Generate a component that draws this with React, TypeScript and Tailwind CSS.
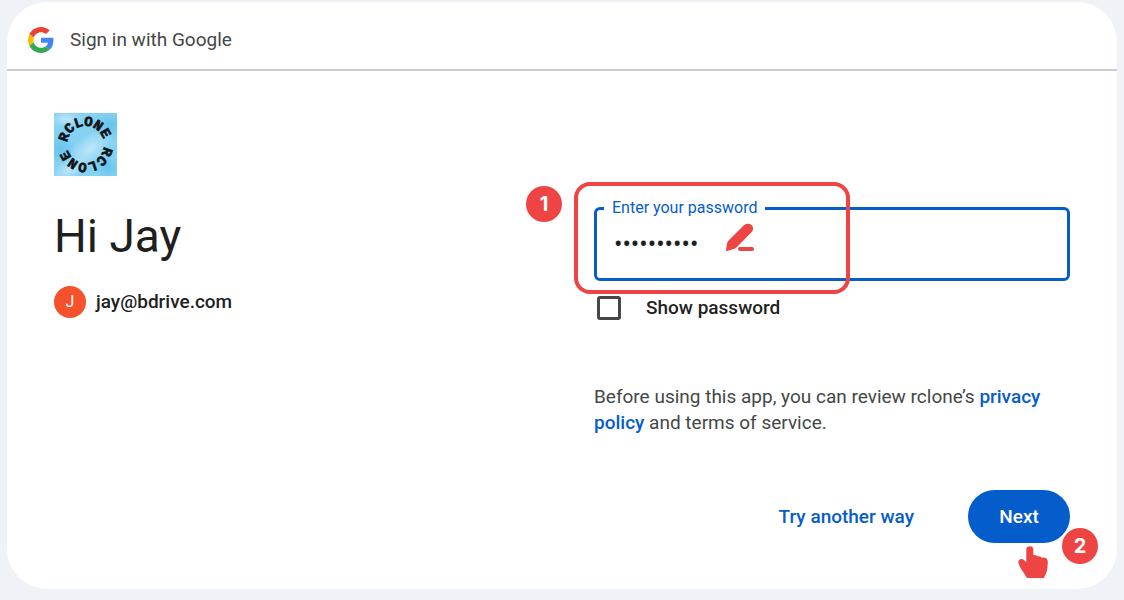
import React, { useState } from "react";

function GoogleLogo() {
  return (
    <svg viewBox="0 0 48 48" className="size-[26px]" aria-hidden="true">
      <path fill="#EA4335" d="M24 9.5c3.54 0 6.71 1.22 9.21 3.6l6.85-6.85C35.9 2.38 30.47 0 24 0 14.62 0 6.51 5.38 2.56 13.22l7.98 6.19C12.43 13.72 17.74 9.5 24 9.5z" />
      <path fill="#4285F4" d="M46.98 24.55c0-1.57-.15-3.09-.38-4.55H24v9.02h12.94c-.58 2.96-2.26 5.48-4.78 7.18l7.73 6c4.51-4.18 7.09-10.36 7.09-17.65z" />
      <path fill="#FBBC05" d="M10.53 28.59c-.48-1.45-.76-2.99-.76-4.59s.27-3.14.76-4.59l-7.98-6.19C.92 16.46 0 20.12 0 24c0 3.88.92 7.54 2.56 10.78l7.97-6.19z" />
      <path fill="#34A853" d="M24 48c6.48 0 11.93-2.13 15.89-5.81l-7.73-6c-2.15 1.45-4.92 2.3-8.16 2.3-6.26 0-11.57-4.22-13.47-9.91l-7.98 6.19C6.51 42.62 14.62 48 24 48z" />
    </svg>
  );
}

function AppLogo() {
  return (
    <svg viewBox="0 0 63 63" className="size-[63px]" role="img" aria-label="rclone">
      <defs>
        <radialGradient id="cloudA">
          <stop offset="0" stopColor="#bfe7fa" />
          <stop offset="1" stopColor="#bfe7fa" stopOpacity="0" />
        </radialGradient>
        <radialGradient id="cloudB">
          <stop offset="0" stopColor="#66c4ec" />
          <stop offset="1" stopColor="#66c4ec" stopOpacity="0" />
        </radialGradient>
        <path id="ring" d="M13 31.5a18.5 18.5 0 0 1 37 0a18.5 18.5 0 0 1 -37 0" />
        <path id="ringLower" d="M50 31.5a18.5 18.5 0 0 1 -37 0a18.5 18.5 0 0 1 37 0" />
      </defs>
      <rect width="63" height="63" fill="#86d2f3" />
      <ellipse cx="56" cy="12" rx="20" ry="14" fill="url(#cloudB)" />
      <ellipse cx="6" cy="36" rx="16" ry="16" fill="url(#cloudB)" />
      <ellipse cx="36" cy="36" rx="26" ry="14" fill="url(#cloudA)" transform="rotate(-40 36 36)" />
      <ellipse cx="16" cy="56" rx="20" ry="10" fill="url(#cloudA)" transform="rotate(-30 16 56)" />
      <ellipse cx="12" cy="6" rx="16" ry="8" fill="url(#cloudA)" />
      <ellipse cx="54" cy="54" rx="14" ry="12" fill="url(#cloudB)" />
      <g fontFamily="Liberation Mono, monospace" fontWeight="700" fontSize="14" fill="#0c1418" stroke="#0c1418" strokeWidth="0.7">
        <text><textPath href="#ring" startOffset="2">RCLONE</textPath></text>
        <text><textPath href="#ringLower" startOffset="2">RCLONE</textPath></text>
      </g>
    </svg>
  );
}

function Step({ children }: { children: React.ReactNode }) {
  return (
    <span className="flex size-9 items-center justify-center rounded-full bg-[#ef4444] font-['Inter',sans-serif] text-xl font-bold text-white">
      {children}
    </span>
  );
}

export default function App() {
  const [visible, setVisible] = useState(false);
  return (
    <div className="min-h-screen bg-[#eff3f8] px-[7px] pt-0.5 pb-[11px] font-['Roboto',sans-serif] text-[19px] leading-[26px] text-[#1f1f1f]">
      <main className="rounded-[40px] bg-white">
        <header className="flex h-[69px] items-center gap-4 border-b-2 border-[#cccccc] px-[21px] pt-2">
          <GoogleLogo />
          <span className="text-[#444746]">Sign in with Google</span>
        </header>

        <div className="grid grid-cols-2 gap-16 px-[47px] pt-[42px] pb-[46px]">
          <section>
            <AppLogo />
            <h1 className="mt-8 text-[46px] leading-14">Hi Jay</h1>
            <div className="mt-[22px] flex items-center gap-2.5">
              <span className="flex size-8 items-center justify-center rounded-full bg-[#f4512c] text-base text-white">J</span>
              <span className="font-medium">jay@bdrive.com</span>
            </div>
          </section>

          <form className="pt-[85px]" onSubmit={(e) => e.preventDefault()}>
            <div className="relative">
              <fieldset className="h-[83px] rounded-md border-[3px] border-[#055dcc] px-[7px]">
                <legend className="px-2 text-base leading-5 text-[#055dcc]">
                  <label htmlFor="password">Enter your password</label>
                </legend>
                <input
                  id="password"
                  type={visible ? "text" : "password"}
                  defaultValue="rclonepass"
                  className="h-[52px] w-full bg-transparent px-2.5 text-[25px] outline-none"
                />
              </fieldset>
              <div className="pointer-events-none absolute -top-4 -left-5 h-28 w-[276px] rounded-2xl border-4 border-[#ef4444]" />
              <svg viewBox="0 0 30 30" className="absolute top-[25px] left-[131px] size-[30px]" aria-hidden="true">
                <path fill="#ef4444" d="M1 27L2 20.5Q2.3 18.8 3.6 17.5L18.6 2.4Q20.6 .5 23.4.8Q27.8 1.5 28.2 5.6Q28.2 7.6 26.8 9L11.6 24.2Q10.4 25.4 8.6 26L3 27.8Q.9 28.4 1 27Z" />
                <rect x="13" y="24" width="16" height="4" rx="2" fill="#ef4444" />
              </svg>
              <div className="absolute -top-3 -left-[68px]"><Step>1</Step></div>
            </div>

            <label className="mt-3.5 ml-[3px] flex items-center gap-[25px] font-medium">
              <input
                type="checkbox"
                checked={visible}
                onChange={(e) => setVisible(e.target.checked)}
                className="size-6 appearance-none rounded-[3px] border-[3px] border-[#444746] checked:bg-[#055dcc]"
              />
              Show password
            </label>

            <p className="mt-[63px] text-[#444746]">
              Before using this app, you can review rclone’s{" "}
              <a href="#privacy" className="font-medium text-[#055dcc]">privacy policy</a> and terms of service.
            </p>

            <div className="mt-[54px] flex items-center justify-end gap-[54px]">
              <button type="button" className="font-medium text-[#055dcc]">Try another way</button>
              <div className="relative">
                <button type="submit" className="h-[53px] w-[102px] rounded-full bg-[#055dcc] font-medium text-white">Next</button>
                <svg viewBox="0 0 30 32" className="absolute top-14 left-[50px] h-8 w-[30px]" aria-hidden="true">
                  <path fill="#ef4444" d="M8.3 3.6Q8.3.2 11.8.2Q15.3.2 15.3 3.6V9.2Q18 8.5 19.6 10.6Q22 9.8 23.8 11.8Q26.5 11.2 28.5 12.6Q29.9 13.8 29.8 16.5Q29.7 23 28.5 26.4L25.9 32H9L2 21Q1.4 19.8 .5 17.2Q-.2 14.4 2 13.2Q4 12.4 5.7 13.8L8.3 16.2Z" />
                </svg>
                <div className="absolute top-[38px] left-[94px]"><Step>2</Step></div>
              </div>
            </div>
          </form>
        </div>
      </main>
    </div>
  );
}
